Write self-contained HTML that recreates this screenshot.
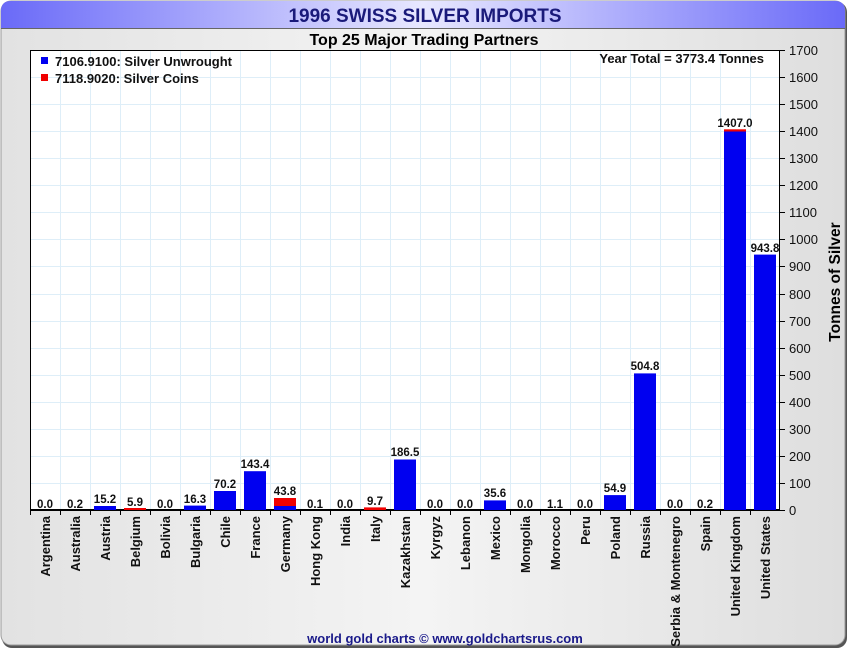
<!DOCTYPE html>
<html><head><meta charset="utf-8"><style>
html,body{margin:0;padding:0;background:#fff;}
svg{display:block;font-family:"Liberation Sans",Arial,sans-serif;}
</style></head><body>
<svg width="850" height="650" viewBox="0 0 850 650" xmlns="http://www.w3.org/2000/svg">
<defs>
<linearGradient id="tb" x1="0" x2="1" y1="0" y2="0">
<stop offset="0" stop-color="#6a6af8"/><stop offset="0.5" stop-color="#e8e8ff"/><stop offset="1" stop-color="#6a6af8"/></linearGradient>
<linearGradient id="bg" x1="0" x2="1" y1="0" y2="0">
<stop offset="0" stop-color="#e2e2e2"/><stop offset="0.5" stop-color="#f4f4f4"/><stop offset="1" stop-color="#dedede"/></linearGradient>
</defs>
<rect x="0" y="0" width="850" height="650" fill="#fff"/>
<rect x="2" y="2" width="845" height="646" rx="10" fill="#555"/>
<rect x="1" y="1" width="844" height="644" rx="10" fill="url(#bg)" stroke="#9a9a9a"/>
<path d="M1,28 L1,11 Q1,1 11,1 L835,1 Q845,1 845,11 L845,28 Z" fill="url(#tb)"/>
<line x1="1" y1="28.5" x2="845" y2="28.5" stroke="#666"/>
<text x="425" y="22" text-anchor="middle" font-size="19" font-weight="bold" fill="#1a1a7a">1996 SWISS SILVER IMPORTS</text>
<text x="424" y="45" text-anchor="middle" font-size="16" font-weight="bold" fill="#000">Top 25 Major Trading Partners</text>
<rect x="30" y="50" width="750" height="460" fill="#fff"/>
<g stroke="#deeef8" stroke-width="1">
<line x1="60.5" y1="50" x2="60.5" y2="510"/><line x1="90.5" y1="50" x2="90.5" y2="510"/><line x1="120.5" y1="50" x2="120.5" y2="510"/><line x1="150.5" y1="50" x2="150.5" y2="510"/><line x1="180.5" y1="50" x2="180.5" y2="510"/><line x1="210.5" y1="50" x2="210.5" y2="510"/><line x1="240.5" y1="50" x2="240.5" y2="510"/><line x1="270.5" y1="50" x2="270.5" y2="510"/><line x1="300.5" y1="50" x2="300.5" y2="510"/><line x1="330.5" y1="50" x2="330.5" y2="510"/><line x1="360.5" y1="50" x2="360.5" y2="510"/><line x1="390.5" y1="50" x2="390.5" y2="510"/><line x1="420.5" y1="50" x2="420.5" y2="510"/><line x1="450.5" y1="50" x2="450.5" y2="510"/><line x1="480.5" y1="50" x2="480.5" y2="510"/><line x1="510.5" y1="50" x2="510.5" y2="510"/><line x1="540.5" y1="50" x2="540.5" y2="510"/><line x1="570.5" y1="50" x2="570.5" y2="510"/><line x1="600.5" y1="50" x2="600.5" y2="510"/><line x1="630.5" y1="50" x2="630.5" y2="510"/><line x1="660.5" y1="50" x2="660.5" y2="510"/><line x1="690.5" y1="50" x2="690.5" y2="510"/><line x1="720.5" y1="50" x2="720.5" y2="510"/><line x1="750.5" y1="50" x2="750.5" y2="510"/>
<line x1="30" y1="483.5" x2="780" y2="483.5"/><line x1="30" y1="456.5" x2="780" y2="456.5"/><line x1="30" y1="429.5" x2="780" y2="429.5"/><line x1="30" y1="402.5" x2="780" y2="402.5"/><line x1="30" y1="375.5" x2="780" y2="375.5"/><line x1="30" y1="348.5" x2="780" y2="348.5"/><line x1="30" y1="321.5" x2="780" y2="321.5"/><line x1="30" y1="294.5" x2="780" y2="294.5"/><line x1="30" y1="266.5" x2="780" y2="266.5"/><line x1="30" y1="239.5" x2="780" y2="239.5"/><line x1="30" y1="212.5" x2="780" y2="212.5"/><line x1="30" y1="185.5" x2="780" y2="185.5"/><line x1="30" y1="158.5" x2="780" y2="158.5"/><line x1="30" y1="131.5" x2="780" y2="131.5"/><line x1="30" y1="104.5" x2="780" y2="104.5"/><line x1="30" y1="77.5" x2="780" y2="77.5"/>
</g>
<rect x="30.5" y="50.5" width="749" height="459" fill="none" stroke="#000"/>
<g fill="#0000f0">
<rect x="94" y="506" width="22" height="4"/>
<rect x="184" y="505.6" width="22" height="4.4"/>
<rect x="214" y="491" width="22" height="19"/>
<rect x="244" y="471.2" width="22" height="38.8"/>
<rect x="274" y="506" width="22" height="4"/>
<rect x="394" y="459.5" width="22" height="50.5"/>
<rect x="484" y="500.4" width="22" height="9.6"/>
<rect x="604" y="495.1" width="22" height="14.9"/>
<rect x="634" y="373.4" width="22" height="136.6"/>
<rect x="724" y="131.5" width="22" height="378.5"/>
<rect x="754" y="254.6" width="22" height="255.4"/>
</g>
<g fill="#f00000">
<rect x="124" y="508" width="22" height="2"/>
<rect x="274" y="498" width="22" height="8"/>
<rect x="364" y="507.4" width="22" height="2.6"/>
<rect x="724" y="129.3" width="22" height="2.2"/>
</g>
<line x1="30" y1="510.5" x2="780" y2="510.5" stroke="#000"/>
<g stroke="#000">
<line x1="30.5" y1="510" x2="30.5" y2="515"/><line x1="60.5" y1="510" x2="60.5" y2="515"/><line x1="90.5" y1="510" x2="90.5" y2="515"/><line x1="120.5" y1="510" x2="120.5" y2="515"/><line x1="150.5" y1="510" x2="150.5" y2="515"/><line x1="180.5" y1="510" x2="180.5" y2="515"/><line x1="210.5" y1="510" x2="210.5" y2="515"/><line x1="240.5" y1="510" x2="240.5" y2="515"/><line x1="270.5" y1="510" x2="270.5" y2="515"/><line x1="300.5" y1="510" x2="300.5" y2="515"/><line x1="330.5" y1="510" x2="330.5" y2="515"/><line x1="360.5" y1="510" x2="360.5" y2="515"/><line x1="390.5" y1="510" x2="390.5" y2="515"/><line x1="420.5" y1="510" x2="420.5" y2="515"/><line x1="450.5" y1="510" x2="450.5" y2="515"/><line x1="480.5" y1="510" x2="480.5" y2="515"/><line x1="510.5" y1="510" x2="510.5" y2="515"/><line x1="540.5" y1="510" x2="540.5" y2="515"/><line x1="570.5" y1="510" x2="570.5" y2="515"/><line x1="600.5" y1="510" x2="600.5" y2="515"/><line x1="630.5" y1="510" x2="630.5" y2="515"/><line x1="660.5" y1="510" x2="660.5" y2="515"/><line x1="690.5" y1="510" x2="690.5" y2="515"/><line x1="720.5" y1="510" x2="720.5" y2="515"/><line x1="750.5" y1="510" x2="750.5" y2="515"/>
<line x1="780" y1="510.5" x2="785" y2="510.5"/><line x1="780" y1="483.5" x2="785" y2="483.5"/><line x1="780" y1="456.5" x2="785" y2="456.5"/><line x1="780" y1="429.5" x2="785" y2="429.5"/><line x1="780" y1="402.5" x2="785" y2="402.5"/><line x1="780" y1="375.5" x2="785" y2="375.5"/><line x1="780" y1="348.5" x2="785" y2="348.5"/><line x1="780" y1="321.5" x2="785" y2="321.5"/><line x1="780" y1="294.5" x2="785" y2="294.5"/><line x1="780" y1="266.5" x2="785" y2="266.5"/><line x1="780" y1="239.5" x2="785" y2="239.5"/><line x1="780" y1="212.5" x2="785" y2="212.5"/><line x1="780" y1="185.5" x2="785" y2="185.5"/><line x1="780" y1="158.5" x2="785" y2="158.5"/><line x1="780" y1="131.5" x2="785" y2="131.5"/><line x1="780" y1="104.5" x2="785" y2="104.5"/><line x1="780" y1="77.5" x2="785" y2="77.5"/><line x1="780" y1="50.5" x2="785" y2="50.5"/>
</g>
<g font-size="13" fill="#111">
<text x="789" y="515">0</text><text x="789" y="488">100</text><text x="789" y="461">200</text><text x="789" y="434">300</text><text x="789" y="407">400</text><text x="789" y="380">500</text><text x="789" y="353">600</text><text x="789" y="326">700</text><text x="789" y="299">800</text><text x="789" y="271">900</text><text x="789" y="244">1000</text><text x="789" y="217">1100</text><text x="789" y="190">1200</text><text x="789" y="163">1300</text><text x="789" y="136">1400</text><text x="789" y="109">1500</text><text x="789" y="82">1600</text><text x="789" y="55">1700</text>
</g>
<text transform="translate(840,282) rotate(-90)" text-anchor="middle" font-size="15.5" font-weight="bold" fill="#000">Tonnes of Silver</text>
<rect x="41" y="57" width="7" height="7" fill="#0000f0"/>
<rect x="41" y="74" width="7" height="7" fill="#f00000"/>
<g font-size="13" font-weight="bold" fill="#111">
<text x="55" y="66">7106.9100: Silver Unwrought</text>
<text x="55" y="83">7118.9020: Silver Coins</text>
<text x="764" y="63" text-anchor="end">Year Total = 3773.4 Tonnes</text>
</g>
<g font-size="11.5" font-weight="bold" fill="#111" text-anchor="middle">
<text x="45" y="508">0.0</text><text x="75" y="508">0.2</text><text x="105" y="503">15.2</text><text x="135" y="506">5.9</text><text x="165" y="508">0.0</text><text x="195" y="503">16.3</text><text x="225" y="488">70.2</text><text x="255" y="468">143.4</text><text x="285" y="495">43.8</text><text x="315" y="508">0.1</text><text x="345" y="508">0.0</text><text x="375" y="505">9.7</text><text x="405" y="456">186.5</text><text x="435" y="508">0.0</text><text x="465" y="508">0.0</text><text x="495" y="497">35.6</text><text x="525" y="508">0.0</text><text x="555" y="508">1.1</text><text x="585" y="508">0.0</text><text x="615" y="492">54.9</text><text x="645" y="370">504.8</text><text x="675" y="508">0.0</text><text x="705" y="508">0.2</text><text x="735" y="127">1407.0</text><text x="765" y="252">943.8</text>
</g>
<g font-size="13" font-weight="bold" fill="#111" text-anchor="end">
<text transform="translate(50,516) rotate(-90)">Argentina</text>
<text transform="translate(80,516) rotate(-90)">Australia</text>
<text transform="translate(110,516) rotate(-90)">Austria</text>
<text transform="translate(140,516) rotate(-90)">Belgium</text>
<text transform="translate(170,516) rotate(-90)">Bolivia</text>
<text transform="translate(200,516) rotate(-90)">Bulgaria</text>
<text transform="translate(230,516) rotate(-90)">Chile</text>
<text transform="translate(260,516) rotate(-90)">France</text>
<text transform="translate(290,516) rotate(-90)">Germany</text>
<text transform="translate(320,516) rotate(-90)">Hong Kong</text>
<text transform="translate(350,516) rotate(-90)">India</text>
<text transform="translate(380,516) rotate(-90)">Italy</text>
<text transform="translate(410,516) rotate(-90)">Kazakhstan</text>
<text transform="translate(440,516) rotate(-90)">Kyrgyz</text>
<text transform="translate(470,516) rotate(-90)">Lebanon</text>
<text transform="translate(500,516) rotate(-90)">Mexico</text>
<text transform="translate(530,516) rotate(-90)">Mongolia</text>
<text transform="translate(560,516) rotate(-90)">Morocco</text>
<text transform="translate(590,516) rotate(-90)">Peru</text>
<text transform="translate(620,516) rotate(-90)">Poland</text>
<text transform="translate(650,516) rotate(-90)">Russia</text>
<text transform="translate(680,516) rotate(-90)">Serbia &amp; Montenegro</text>
<text transform="translate(710,516) rotate(-90)">Spain</text>
<text transform="translate(740,516) rotate(-90)">United Kingdom</text>
<text transform="translate(770,516) rotate(-90)">United States</text>
</g>
<text x="445" y="643" text-anchor="middle" font-size="13" font-weight="bold" fill="#1a1a8a">world gold charts © www.goldchartsrus.com</text>
</svg>
</body></html>
